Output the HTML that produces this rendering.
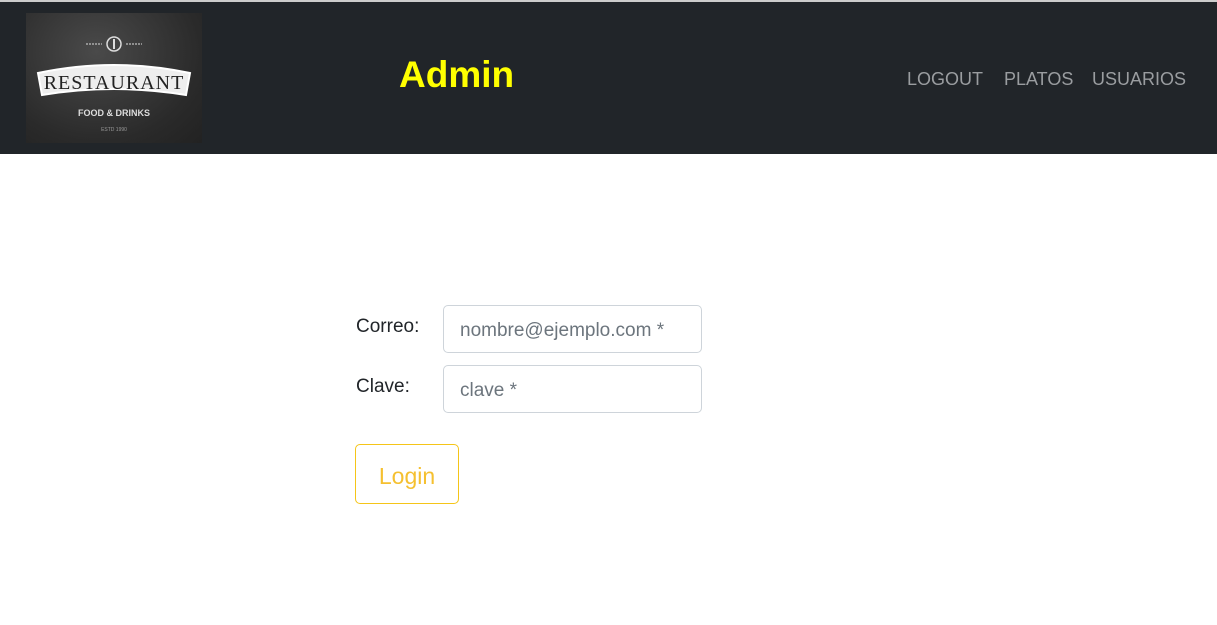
<!DOCTYPE html>
<html><head><meta charset="utf-8"><style>
body{margin:0;width:1217px;height:625px;background:#fff;font-family:"Liberation Sans",sans-serif;position:relative;overflow:hidden}
.top{position:absolute;left:0;top:0;width:1217px;height:2px;background:#ccc}
.nav{position:absolute;left:0;top:2px;width:1217px;height:152px;background:#212529}
.logo{position:absolute;left:26px;top:11px;width:176px;height:130px;background:radial-gradient(ellipse at 40% 30%,#4a4a4a,#2a2a2a 70%,#222)}
.admin{position:absolute;left:399px;top:52px;font-size:37px;font-weight:bold;color:#ffff00}
.links{position:absolute;top:67px;font-size:18px;color:#9a9da0}
.lbl{position:absolute;font-size:19px;color:#212529}
.inp{position:absolute;left:443px;border:1px solid #ced4da;border-radius:5px;box-sizing:border-box;width:259px;font-size:19px;color:#6c757d;padding:14px 0 0 16px}
.btn{position:absolute;left:355px;top:444px;width:104px;height:60px;border:1px solid #f5c518;border-radius:5px;box-sizing:border-box;color:#f5c030;font-size:23px;text-align:center;line-height:62px}
</style></head><body>
<div class="top"></div>
<div class="nav">
<div class="logo">
<svg width="176" height="130" viewBox="0 0 176 130">
<circle cx="88" cy="31" r="7" fill="none" stroke="#ddd" stroke-width="1.5"/>
<line x1="88" y1="26" x2="88" y2="36" stroke="#ddd" stroke-width="2"/>
<line x1="60" y1="31" x2="76" y2="31" stroke="#aaa" stroke-width="1.5" stroke-dasharray="2 1"/>
<line x1="100" y1="31" x2="116" y2="31" stroke="#aaa" stroke-width="1.5" stroke-dasharray="2 1"/>
<path d="M12 60 Q88 44 164 60 L160 82 Q88 70 16 82 Z" fill="#eee" stroke="#fff" stroke-width="2"/>
<text x="88" y="76" text-anchor="middle" font-family="Liberation Serif,serif" font-size="20" fill="#222" letter-spacing="1">RESTAURANT</text>
<text x="88" y="103" text-anchor="middle" font-size="9" font-weight="bold" fill="#ddd">FOOD &amp; DRINKS</text>
<text x="88" y="118" text-anchor="middle" font-size="5" fill="#999">ESTD 1990</text>
</svg>
</div>
<div class="admin">Admin</div>
<div class="links" style="left:907px">LOGOUT</div>
<div class="links" style="left:1004px">PLATOS</div>
<div class="links" style="left:1092px">USUARIOS</div>
</div>
<div class="lbl" style="left:356px;top:316px">Correo:</div>
<div class="lbl" style="left:356px;top:376px">Clave:</div>
<div class="inp" style="top:305px;height:48px">nombre@ejemplo.com *</div>
<div class="inp" style="top:365px;height:48px">clave *</div>
<div class="btn">Login</div>
</body></html>
